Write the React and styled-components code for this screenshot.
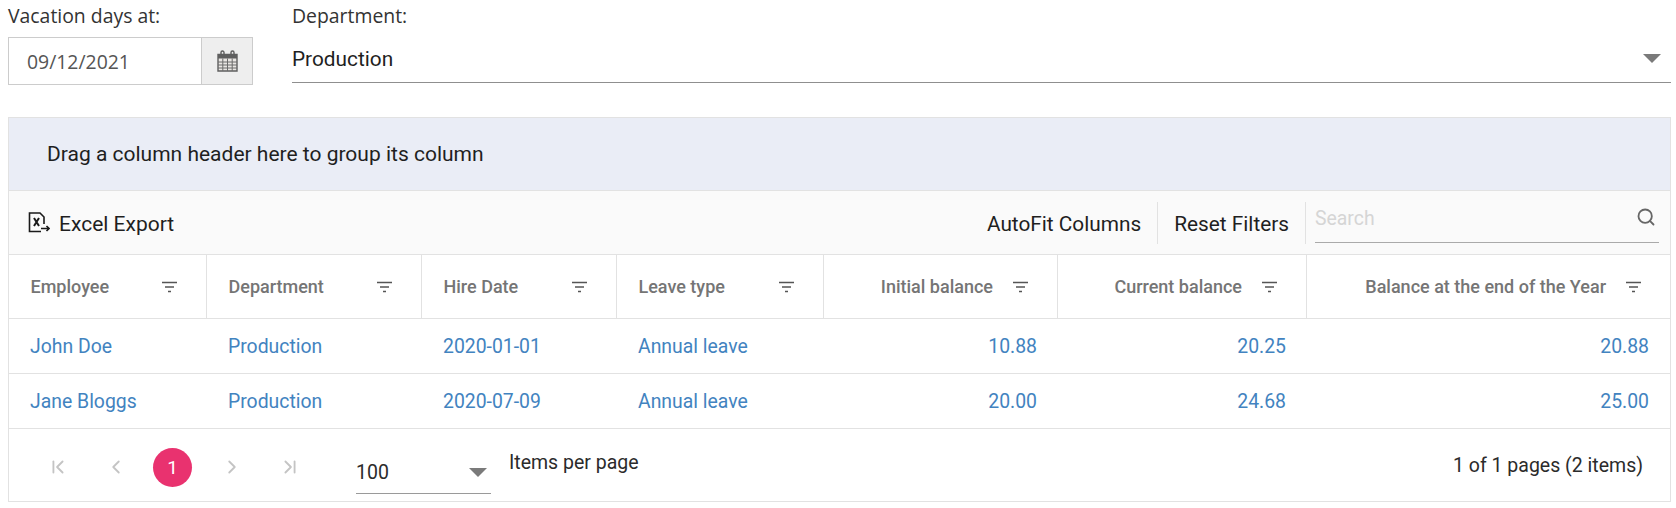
import React from 'react';
import styled, { createGlobalStyle } from 'styled-components';
import { ChevronLeft, ChevronRight, ChevronFirst, ChevronLast, Search } from 'lucide-react';

const GlobalStyle = createGlobalStyle`
  html, body {
    margin: 0;
    padding: 0;
    background: #fff;
    font-family: Roboto, "Liberation Sans", sans-serif;
  }
`;

const Page = styled.div`
  width: 1676px;
  height: 508px;
  padding: 0 5px 0 8px;
  box-sizing: border-box;
  overflow: hidden;
`;

const Filters = styled.div`
  display: flex;
  gap: 39px;
  height: 117px;
`;

const DateField = styled.div`
  width: 245px;
  flex: none;
`;

const DepartmentField = styled.div`
  flex: 1;
`;

const Label = styled.div`
  font-family: "Open Sans", sans-serif;
  font-size: 19.4px;
  line-height: 26px;
  height: 37px;
  padding-top: 3px;
  box-sizing: border-box;
  color: #333;
  white-space: nowrap;
`;

const DateBox = styled.div`
  display: flex;
  height: 48px;
  border: 1px solid #ccc;
  box-sizing: border-box;
`;

const DateValue = styled.div`
  flex: 1;
  padding-left: 18px;
  font-family: "Open Sans", sans-serif;
  font-size: 19.4px;
  line-height: 47px;
  color: #555;
`;

const DateButton = styled.div`
  width: 50px;
  display: flex;
  align-items: center;
  justify-content: center;
  background: #eee;
  border-left: 1px solid #ccc;
`;

const Select = styled.div`
  display: flex;
  align-items: center;
  justify-content: space-between;
  height: 46px;
  border-bottom: 1px solid #8f8f8f;
  font-size: 20.8px;
  color: #1f1f1f;
  padding: 0 10px 2px 0;
  box-sizing: border-box;
`;

const Caret = styled.span`
  width: 0;
  height: 0;
  border-left: 9px solid transparent;
  border-right: 9px solid transparent;
  border-top: 9px solid #7a7a7a;
`;

const Grid = styled.div`
  border: 1px solid #e2e2e2;
  box-sizing: border-box;
  height: 385px;
  display: flex;
  flex-direction: column;
`;

const GroupPanel = styled.div`
  height: 73px;
  flex: none;
  background: #eaedf6;
  border-bottom: 1px solid #e2e2e2;
  padding-left: 38px;
  display: flex;
  align-items: center;
  font-size: 21px;
  color: #1f1f1f;
  box-sizing: border-box;
`;

const Toolbar = styled.div`
  height: 64px;
  flex: none;
  background: #fafafa;
  border-bottom: 1px solid #e2e2e2;
  display: flex;
  align-items: center;
  justify-content: space-between;
  box-sizing: border-box;
  padding: 0 11px 0 19px;
`;

const ToolGroup = styled.div`
  display: flex;
  align-items: center;
  font-size: 20.8px;
  color: #1f1f1f;
`;

const ExportButton = styled(ToolGroup)`
  gap: 9px;
  font-size: 21px;
`;

const ExportLabel = styled.span`
  padding-top: 2px;
`;

const ToolButton = styled.div`
  height: 42px;
  line-height: 44px;
  padding: 0 16px;
  border-right: 1px solid #e2e2e2;
`;

const SearchBox = styled.div`
  width: 344px;
  height: 40px;
  margin-left: 9px;
  border-bottom: 1px solid #aaa;
  display: flex;
  justify-content: space-between;
  padding: 4px 3px 0 0;
  box-sizing: border-box;
  font-size: 19.4px;
  line-height: 24px;
  color: #d5d5d5;
`;

const Row = styled.div`
  display: grid;
  grid-template-columns: 198px 215px 195px 207px 234px 249px 1fr;
  height: ${p => p.$height}px;
  flex: none;
  border-bottom: 1px solid #e2e2e2;
  box-sizing: border-box;
`;

const HeaderCell = styled.div`
  display: flex;
  align-items: center;
  justify-content: ${p => (p.$right ? 'flex-end' : 'space-between')};
  gap: 20px;
  padding: 0 29px 0 21.5px;
  font-size: 18px;
  font-weight: 500;
  color: #757575;
  border-right: 1px solid #e2e2e2;
  box-sizing: border-box;
  white-space: nowrap;
  &:last-child {
    border-right: 0;
  }
`;

const Cell = styled.div`
  display: flex;
  align-items: center;
  justify-content: ${p => (p.$right ? 'flex-end' : 'flex-start')};
  padding: 0 21px;
  font-size: 19.4px;
  color: #4283c0;
  box-sizing: border-box;
`;

const Pager = styled.div`
  flex: 1;
  display: flex;
  align-items: center;
  padding: 0 27px;
  color: #2b2b2b;
  font-size: 19.5px;
`;

const PageButton = styled.div`
  width: 44px;
  height: 38px;
  margin: 4px 14px 0 0;
  display: flex;
  align-items: center;
  justify-content: center;
  color: #c4c4c4;
`;

const CurrentPage = styled.div`
  width: 39px;
  height: 39px;
  margin: 4px 18px 0 1px;
  border-radius: 50%;
  background: #e9326f;
  color: #fff;
  display: flex;
  align-items: center;
  justify-content: center;
  font-size: 19px;
`;

const PageSize = styled.div`
  width: 135px;
  height: 46px;
  margin: 12px 18px 0 30px;
  padding: 3px 4px 0 0;
  border-bottom: 1px solid #9a9a9a;
  box-sizing: border-box;
  display: flex;
  align-items: center;
  justify-content: space-between;
`;

const ItemsLabel = styled.span`
  margin-top: -6px;
`;

const PagerInfo = styled.div`
  margin-left: auto;
`;

const CalendarIcon = () => (
  <svg width="21" height="22" viewBox="0 0 21 22" fill="none">
    <path d="M1 4.5h19v16.5H1z" fill="#e9e6e3" stroke="#5f5f5f" strokeWidth="1.4" />
    <path d="M1 4h19v4.5H1z" fill="#5f5f5f" />
    <path d="M4 6V2.5a1.5 1.5 0 0 1 3 0V6M14 6V2.5a1.5 1.5 0 0 1 3 0V6" stroke="#5f5f5f" strokeWidth="1.4" />
    <path d="M1 12h19M1 15h19M1 18h19M5.8 8.5V21M10.5 8.5V21M15.2 8.5V21" stroke="#6b6b6b" />
  </svg>
);

const ExcelIcon = () => (
  <svg width="22" height="21" viewBox="0 0 22 21" fill="none" stroke="#1a1a1a" strokeWidth="1.6">
    <path d="M16 12V5l-4-4H1.5v18.5H13" />
    <path d="M6 6l5 8M11 6l-5 8" strokeWidth="2" />
    <path d="M13 16.5h8M18.5 14l2.5 2.5-2.5 2.5" />
  </svg>
);

const FilterIcon = () => (
  <svg width="15" height="12" viewBox="0 0 15 12" fill="none" stroke="#555" strokeWidth="1.6">
    <path d="M0 1.5h15M3 6h9M6 10.5h3" />
  </svg>
);

const columns = [
  { title: 'Employee', key: 'employee' },
  { title: 'Department', key: 'department' },
  { title: 'Hire Date', key: 'hired' },
  { title: 'Leave type', key: 'leave' },
  { title: 'Initial balance', key: 'initial', right: true },
  { title: 'Current balance', key: 'current', right: true },
  { title: 'Balance at the end of the Year', key: 'end', right: true },
];

const rows = [
  { employee: 'John Doe', department: 'Production', hired: '2020-01-01', leave: 'Annual leave', initial: '10.88', current: '20.25', end: '20.88' },
  { employee: 'Jane Bloggs', department: 'Production', hired: '2020-07-09', leave: 'Annual leave', initial: '20.00', current: '24.68', end: '25.00' },
];

export default function App() {
  return (
    <Page>
      <GlobalStyle />
      <Filters>
        <DateField>
          <Label>Vacation days at:</Label>
          <DateBox>
            <DateValue>09/12/2021</DateValue>
            <DateButton><CalendarIcon /></DateButton>
          </DateBox>
        </DateField>
        <DepartmentField>
          <Label>Department:</Label>
          <Select>
            Production
            <Caret />
          </Select>
        </DepartmentField>
      </Filters>
      <Grid>
        <GroupPanel>Drag a column header here to group its column</GroupPanel>
        <Toolbar>
          <ExportButton><ExcelIcon /><ExportLabel>Excel Export</ExportLabel></ExportButton>
          <ToolGroup>
            <ToolButton>AutoFit Columns</ToolButton>
            <ToolButton>Reset Filters</ToolButton>
            <SearchBox>
              Search
              <Search size={20} color="#666" strokeWidth={2.2} />
            </SearchBox>
          </ToolGroup>
        </Toolbar>
        <Row $height={64}>
          {columns.map(c => (
            <HeaderCell key={c.key} $right={c.right}>
              {c.title}
              <FilterIcon />
            </HeaderCell>
          ))}
        </Row>
        {rows.map(r => (
          <Row $height={55} key={r.employee}>
            {columns.map(c => (
              <Cell key={c.key} $right={c.right}>{r[c.key]}</Cell>
            ))}
          </Row>
        ))}
        <Pager>
          <PageButton><ChevronFirst size={22} strokeWidth={2} /></PageButton>
          <PageButton><ChevronLeft size={22} strokeWidth={2} /></PageButton>
          <CurrentPage>1</CurrentPage>
          <PageButton><ChevronRight size={22} strokeWidth={2} /></PageButton>
          <PageButton><ChevronLast size={22} strokeWidth={2} /></PageButton>
          <PageSize>100<Caret /></PageSize>
          <ItemsLabel>Items per page</ItemsLabel>
          <PagerInfo>1 of 1 pages (2 items)</PagerInfo>
        </Pager>
      </Grid>
    </Page>
  );
}
